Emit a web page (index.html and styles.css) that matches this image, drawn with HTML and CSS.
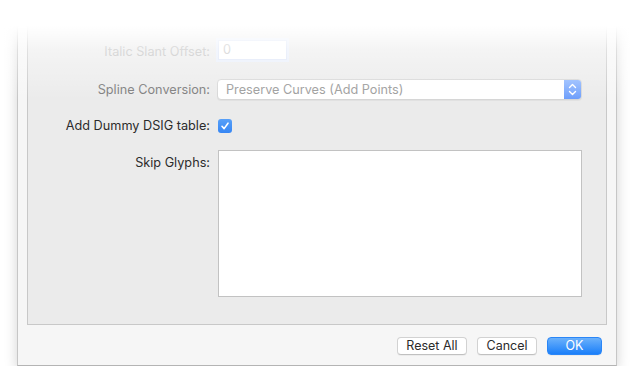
FILE: index.html
```html
<!DOCTYPE html>
<html>
<head>
<meta charset="utf-8">
<link rel="stylesheet" href="styles.css">
</head>
<body>
<div class="window">
  <div class="panel">
    <div class="form">
      <div class="label disabled row-italic">Italic Slant Offset:</div>
      <div class="ctrl row-italic"><div class="field"><span>0</span></div></div>

      <div class="label muted row-spline">Spline Conversion:</div>
      <div class="ctrl row-spline">
        <div class="popup">
          <span class="popup-text">Preserve Curves (Add Points)</span>
          <span class="stepper">
            <svg width="9" height="13" viewBox="0 0 9 13"><path d="M1.5 4.5 L4.5 1.5 L7.5 4.5 M1.5 8.5 L4.5 11.5 L7.5 8.5" fill="none" stroke="#fff" stroke-width="1.4" stroke-linecap="round" stroke-linejoin="round"/></svg>
          </span>
        </div>
      </div>

      <div class="label row-check">Add Dummy DSIG table:</div>
      <div class="ctrl row-check">
        <span class="checkbox">
          <svg width="10" height="10" viewBox="0 0 10 10"><path d="M2 5.3 L4.1 7.6 L8 2.2" fill="none" stroke="#fff" stroke-width="1.6" stroke-linecap="round" stroke-linejoin="round"/></svg>
        </span>
      </div>

      <div class="label row-skip">Skip Glyphs:</div>
      <div class="ctrl row-skip"><div class="textarea"></div></div>
    </div>
  </div>
  <div class="buttons">
    <button class="btn">Reset All</button>
    <button class="btn">Cancel</button>
    <button class="btn primary">OK</button>
  </div>
  <div class="fade"></div>
</div>
</body>
</html>
```

FILE: styles.css
```css
html, body {
  margin: 0;
  padding: 0;
  background: #ffffff;
  font-family: "Inter", "Noto Sans", sans-serif;
  font-size: 12.7px;
  color: #2b2b2b;
}

.window {
  position: relative;
  margin-left: 17px;
  width: 600px;
  height: 366px;
  background: #f6f6f6;
  border-left: 1px solid #c6c6c6;
  border-right: 1px solid #c6c6c6;
  border-bottom: 1px solid #b4b4b4;
  box-shadow: 0 4px 12px rgba(0, 0, 0, 0.18);
  box-sizing: border-box;
  display: flex;
  flex-direction: column;
}

.panel {
  margin: 0 9px 0 9px;
  height: 325px;
  box-sizing: border-box;
  background: #ebebeb;
  border-left: 1px solid #c8c8c8;
  border-right: 1px solid #c8c8c8;
  border-bottom: 1px solid #c8c8c8;
}

.form {
  display: grid;
  grid-template-columns: 182px 1fr;
  column-gap: 7px;
  padding: 0 24px 0 0;
}

.label {
  text-align: right;
  white-space: nowrap;
}

.disabled { color: #bcbcbc; }
.muted { color: #7a7a7a; }

.row-italic { margin-top: 41px; height: 21px; line-height: 21px; }
.row-spline { margin-top: 17px; height: 21px; line-height: 21px; }
.row-check { margin-top: 18px; height: 16px; line-height: 16px; }
.row-skip { margin-top: 16px; }

.label.row-skip { padding-top: 5px; }

.field {
  width: 69px;
  height: 20px;
  background: #fff;
  border: 1px solid #dde5f7;
  box-shadow: 0 0 0 2px #e8eefb;
  margin-left: 1px;
  margin-top: -1px;
  box-sizing: border-box;
  color: #c4c4c4;
  line-height: 18px;
  padding-left: 4px;
}

.popup {
  display: flex;
  height: 21px;
  box-sizing: border-box;
  background: #fff;
  border: 1px solid #d6d6d6;
  border-radius: 4px;
  overflow: hidden;
  box-shadow: 0 1px 0 rgba(0, 0, 0, 0.04);
}

.popup-text {
  flex: 1;
  padding-left: 8px;
  color: #9a9a9a;
  line-height: 19px;
}

.stepper {
  width: 17px;
  background: linear-gradient(#8db6ff, #6c9dfb);
  display: flex;
  align-items: center;
  justify-content: center;
}

.checkbox {
  display: flex;
  align-items: center;
  justify-content: center;
  width: 14px;
  height: 14px;
  margin-left: 1px;
  margin-top: 1px;
  border-radius: 3px;
  background: linear-gradient(#58a0f8, #3686f4);
}

.textarea {
  margin-left: 1px;
  height: 147px;
  background: #fff;
  border: 1px solid #c2c2c2;
  box-sizing: border-box;
}

.buttons {
  display: flex;
  justify-content: flex-end;
  gap: 10px;
  padding: 12px 14px 0 0;
}

.btn {
  font-family: inherit;
  font-size: 12.5px;
  color: #2b2b2b;
  height: 18px;
  padding: 0;
  background: #fff;
  border: 1px solid #d2d2d2;
  border-bottom-color: #c0c0c0;
  border-radius: 4px;
  line-height: 16px;
  box-shadow: 0 1px 0 rgba(0, 0, 0, 0.04);
}

.btn:nth-child(1) { width: 70px; }
.btn:nth-child(2) { width: 60px; }

.btn.primary {
  width: 55px;
  color: #fff;
  border-color: #2a86f7;
  background: linear-gradient(#6bb1fb, #1b7ff9);
}

.fade {
  position: absolute;
  left: -20px;
  right: -20px;
  top: 0;
  height: 100px;
  background: linear-gradient(rgba(255,255,255,1) 0px, rgba(255,255,255,1) 26px, rgba(255,255,255,0.45) 50px, rgba(255,255,255,0) 100px);
  pointer-events: none;
}
```
